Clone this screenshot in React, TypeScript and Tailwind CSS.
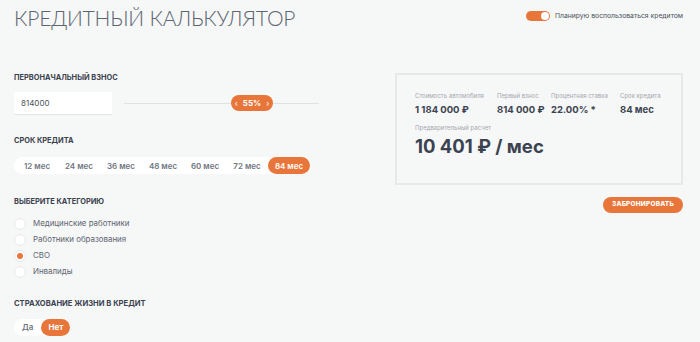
import { useState } from "react";

const terms = [12, 24, 36, 48, 60, 72, 84];
const categories = [
  "Медицинские работники",
  "Работники образования",
  "СВО",
  "Инвалиды",
];

export default function App() {
  const [term, setTerm] = useState(84);
  const [category, setCategory] = useState("СВО");
  const [insurance, setInsurance] = useState(false);
  const [planCredit, setPlanCredit] = useState(true);

  return (
    <div
      className="w-[700px] h-[342px] overflow-hidden bg-[#f6f7f7] text-[#3b4350] pl-[14px] pr-[17px]"
      style={{ fontFamily: "Inter, 'Noto Sans', sans-serif" }}
    >
      <div className="flex items-start justify-between pt-[5px]">
        <h1
          className="text-[21px] font-light tracking-[-0.2px] text-[#5b6570] leading-[26px]"
          style={{ fontFamily: "Lato, sans-serif" }}
        >
          КРЕДИТНЫЙ КАЛЬКУЛЯТОР
        </h1>
        <label className="flex items-center gap-[5px] mt-[6px] cursor-pointer">
          <button
            onClick={() => setPlanCredit(!planCredit)}
            className={`w-[24px] h-[10px] rounded-full flex items-center px-[1px] ${
              planCredit ? "bg-[#e8763a] justify-end" : "bg-gray-300 justify-start"
            }`}
          >
            <span className="w-[8px] h-[8px] rounded-full bg-white" />
          </button>
          <span className="text-[6.8px] text-[#4a525c] whitespace-nowrap">Планирую воспользоваться кредитом</span>
        </label>
      </div>

      <div className="flex mt-[42px]">
        <div className="w-[310px]">
          <h2 className="text-[7.4px] font-bold leading-[10px]">ПЕРВОНАЧАЛЬНЫЙ ВЗНОС</h2>
          <div className="flex items-center mt-[9px]">
            <div className="w-[98px] h-[23px] bg-white border-b border-[#e2e4e6] flex items-center pl-[7px] text-[8px] text-[#4a525c]">
              814000
            </div>
            <div className="relative ml-[12px] w-[195px] h-[1px] bg-[#dfe1e3]">
              <div className="absolute left-[107px] top-[-8px] w-[42px] h-[16px] rounded-full bg-[#e8763a] text-white text-[8px] font-bold flex items-center justify-center gap-[5px]">
                <span className="text-[8px] font-normal">‹</span>
                <span>55%</span>
                <span className="text-[8px] font-normal">›</span>
              </div>
            </div>
          </div>

          <h2 className="text-[7.4px] font-bold leading-[10px] mt-[21px]">СРОК КРЕДИТА</h2>
          <div className="mt-[11px] inline-flex items-center h-[17px] bg-white rounded-full pl-[2px] pr-[1px]">
            {terms.map((t) => (
              <button
                key={t}
                onClick={() => setTerm(t)}
                className={`h-[17px] w-[42px] rounded-full text-[8px] font-semibold whitespace-nowrap ${
                  term === t ? "bg-[#e8763a] text-white font-bold" : "text-[#707780]"
                }`}
              >
                {t} мес
              </button>
            ))}
          </div>

          <h2 className="text-[7.4px] font-bold leading-[10px] mt-[22px]">ВЫБЕРИТЕ КАТЕГОРИЮ</h2>
          <div className="mt-[9px] flex flex-col">
            {categories.map((c) => (
              <button
                key={c}
                onClick={() => setCategory(c)}
                className="flex items-center gap-[7px] h-[16px] text-left"
              >
                <span className="w-[12px] h-[12px] rounded-full bg-white border border-[#e6e8ea] flex items-center justify-center">
                  {category === c && <span className="w-[6px] h-[6px] rounded-full bg-[#e8763a]" />}
                </span>
                <span className="text-[7.9px] text-[#5d6570]">{c}</span>
              </button>
            ))}
          </div>

          <h2 className="text-[7.6px] font-bold leading-[10px] mt-[19px]">СТРАХОВАНИЕ ЖИЗНИ В КРЕДИТ</h2>
          <div className="mt-[10px] inline-flex items-center h-[17px] bg-white rounded-full">
            <button
              onClick={() => setInsurance(true)}
              className={`h-[17px] px-[8px] rounded-full text-[8px] font-semibold ${
                insurance ? "bg-[#e8763a] text-white" : "text-[#707780]"
              }`}
            >
              Да
            </button>
            <button
              onClick={() => setInsurance(false)}
              className={`h-[17px] px-[7px] rounded-full text-[8px] font-bold ${
                !insurance ? "bg-[#e8763a] text-white" : "text-[#707780]"
              }`}
            >
              Нет
            </button>
          </div>
        </div>

        <div className="ml-[71px] flex-1 flex flex-col items-end">
          <div className="w-[288px] h-[112px] border-[2px] border-[#e6e8ea] px-[18px] pt-[16px]">
            <div className="flex whitespace-nowrap">
              <div className="w-[82px]">
                <div className="text-[6px] text-[#a3a8ae] leading-[9px]">Стоимость автомобиля</div>
                <div className="text-[9.5px] font-bold leading-[13px] mt-[3px]">1 184 000 ₽</div>
              </div>
              <div className="w-[54px]">
                <div className="text-[6px] text-[#a3a8ae] leading-[9px]">Первый взнос</div>
                <div className="text-[9.5px] font-bold leading-[13px] mt-[3px]">814 000 ₽</div>
              </div>
              <div className="w-[69px]">
                <div className="text-[6px] text-[#a3a8ae] leading-[9px]">Процентная ставка</div>
                <div className="text-[9.5px] font-bold leading-[13px] mt-[3px]">22.00% *</div>
              </div>
              <div>
                <div className="text-[6px] text-[#a3a8ae] leading-[9px]">Срок кредита</div>
                <div className="text-[9.5px] font-bold leading-[13px] mt-[3px]">{term} мес</div>
              </div>
            </div>
            <div className="text-[6px] text-[#a3a8ae] leading-[9px] mt-[7px]">Предварительный расчет</div>
            <div className="text-[18.5px] font-bold leading-[24px] mt-[2px] text-[#3b4350] whitespace-nowrap">10 401 ₽ / мес</div>
          </div>
          <button className="mt-[12px] w-[80px] h-[16px] rounded-full bg-[#e8763a] text-white text-[6.5px] font-extrabold tracking-[0.2px]">
            ЗАБРОНИРОВАТЬ
          </button>
        </div>
      </div>
    </div>
  );
}
